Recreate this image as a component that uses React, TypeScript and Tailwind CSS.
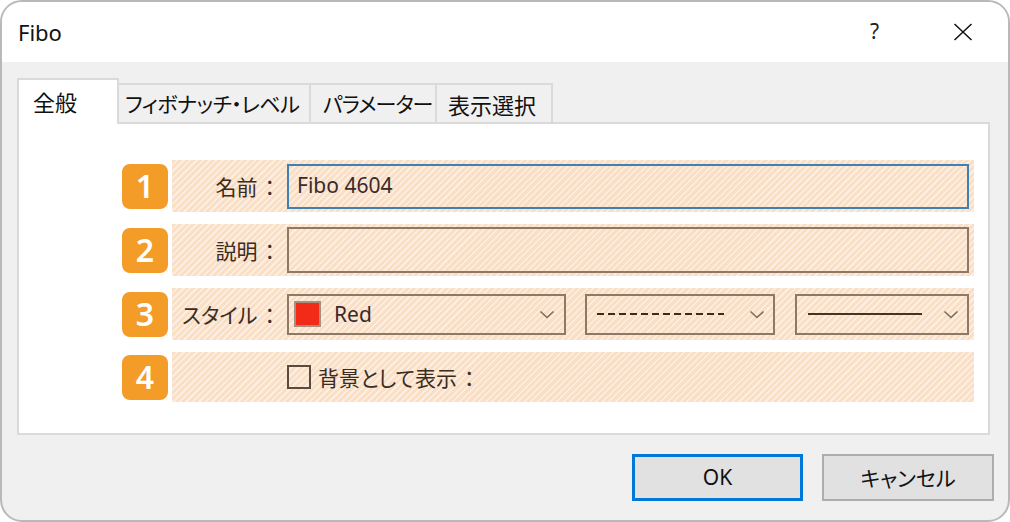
import React from "react";

const FONT = "font-['Noto_Sans_CJK_JP','Noto_Sans',sans-serif]";
const STRIPE =
  "bg-[repeating-linear-gradient(135deg,#f9dfc6_0px,#f9dfc6_3px,#fdeee1_3px,#fdeee1_4.6px)]";

function Chevron({ className = "" }: { className?: string }) {
  return (
    <svg width="16" height="9" viewBox="0 0 16 9" className={className}>
      <path d="M1.5 1.5 L8 7.5 L14.5 1.5" fill="none" stroke="#7f6c5b" strokeWidth="1.6" />
    </svg>
  );
}

function Badge({ n }: { n: string }) {
  return (
    <div className="w-[46px] h-[45px] rounded-[8px] bg-[#f39c27] flex items-center justify-center text-white text-[32px] font-semibold font-['Noto_Sans',sans-serif] leading-none shrink-0">
      {n}
    </div>
  );
}

function Label({ text }: { text: string }) {
  return (
    <div className="w-[115px] shrink-0 flex justify-end items-center pr-[12px] text-[21px] text-[#3b2c22] [font-feature-settings:'palt'] leading-none whitespace-nowrap">
      <span>{text}</span>
      <span className="ml-[7px]">：</span>
    </div>
  );
}

export default function App() {
  return (
    <div className={`w-[1010px] h-[522px] bg-white ${FONT}`}>
      <div className="h-full rounded-[22px] border-2 border-[#b9b9b9] overflow-hidden flex flex-col bg-[#f0f0f0]">
        {/* Title bar */}
        <div className="h-[60px] bg-white flex items-center pl-[16px] pr-[35px] shrink-0">
          <span className="text-[22px] text-[#111] font-['Noto_Sans',sans-serif]">Fibo</span>
          <div className="ml-auto flex items-center gap-[74px]">
            <span className="text-[21px] text-[#222] font-['Noto_Sans',sans-serif]">?</span>
            <svg width="20" height="18" viewBox="0 0 20 18">
              <path d="M1.5 1 L18.5 17 M18.5 1 L1.5 17" stroke="#111" strokeWidth="1.5" fill="none" />
            </svg>
          </div>
        </div>

        {/* Body */}
        <div className="flex-1 flex flex-col pl-[15px] pr-[18px] pt-[16px]">
          {/* Tabs */}
          <div className="flex items-end h-[46px] mb-[-2px] relative z-10 whitespace-nowrap">
            <div className="w-[102px] h-[46px] border-2 border-b-0 border-[#dadada] bg-white flex items-center pl-[14px] pb-[2px] text-[22px] text-[#111] leading-none">
              全般
            </div>
            <div className="w-[192px] h-[41px] border-t-2 border-r-2 border-b-2 border-[#dadada] bg-[#f0f0f0] flex items-center pl-[6px] text-[21px] text-[#111] leading-none [font-feature-settings:'palt'] tracking-[-0.5px]">
              フィボナッチ・レベル
            </div>
            <div className="w-[126px] h-[41px] border-t-2 border-r-2 border-b-2 border-[#dadada] bg-[#f0f0f0] flex items-center pl-[12px] text-[21px] text-[#111] leading-none [font-feature-settings:'palt'] tracking-[-1px] overflow-hidden">
              パラメーター
            </div>
            <div className="w-[116px] h-[41px] border-t-2 border-r-2 border-b-2 border-[#dadada] bg-[#f0f0f0] flex items-center pl-[11px] text-[22px] text-[#111] leading-none">
              表示選択
            </div>
          </div>

          {/* Panel */}
          <div className="h-[313px] border-2 border-[#dadada] bg-white flex flex-col gap-[12px] pt-[36px] pl-[103px] pr-[14px]">
            {/* Row 1 */}
            <div className="flex items-center gap-[4px]">
              <Badge n="1" />
              <div className={`flex-1 h-[52px] flex items-center ${STRIPE}`}>
                <Label text="名前" />
                <div className="w-[682px] h-[45px] border-2 border-[#3f80b5] flex items-center pl-[8px] text-[21px] text-[#3a2a2c] font-['Noto_Sans',sans-serif]">
                  Fibo 4604
                </div>
              </div>
            </div>
            {/* Row 2 */}
            <div className="flex items-center gap-[4px]">
              <Badge n="2" />
              <div className={`flex-1 h-[52px] flex items-center ${STRIPE}`}>
                <Label text="説明" />
                <div className="w-[682px] h-[46px] border-2 border-[#8d7966]" />
              </div>
            </div>
            {/* Row 3 */}
            <div className="flex items-center gap-[4px]">
              <Badge n="3" />
              <div className={`flex-1 h-[52px] flex items-center ${STRIPE}`}>
                <Label text="スタイル" />
                <div className="w-[279px] h-[41px] border-2 border-[#8d7966] flex items-center pl-[5px] pr-[9px]">
                  <div className="w-[27px] h-[26px] bg-[#f22a18] border-2 border-[#a3907f]" />
                  <span className="ml-[13px] text-[21px] text-[#3a2a2c] font-['Noto_Sans',sans-serif] leading-none">Red</span>
                  <Chevron className="ml-auto" />
                </div>
                <div className="ml-[19px] w-[190px] h-[41px] border-2 border-[#8d7966] flex items-center pl-[10px] pr-[8px]">
                  <div className="w-[127px] h-[2px] bg-[repeating-linear-gradient(90deg,#3d2a1c_0px,#3d2a1c_7px,transparent_7px,transparent_11px)]" />
                  <Chevron className="ml-auto" />
                </div>
                <div className="ml-[20px] w-[174px] h-[41px] border-2 border-[#8d7966] flex items-center pl-[11px] pr-[8px]">
                  <div className="w-[114px] h-[2px] bg-[#4a3222]" />
                  <Chevron className="ml-auto" />
                </div>
              </div>
            </div>
            {/* Row 4 */}
            <div className="flex items-center gap-[4px]">
              <Badge n="4" />
              <div className={`flex-1 h-[50px] flex items-center ${STRIPE}`}>
                <div className="w-[115px] shrink-0" />
                <div className="w-[24px] h-[24px] border-2 border-[#5c4a3c]" />
                <span className="ml-[7px] text-[21px] text-[#3b2c22] leading-none [font-feature-settings:'palt'] whitespace-nowrap">
                  背景として表示<span className="ml-[7px]">：</span>
                </span>
              </div>
            </div>
          </div>

          {/* Buttons */}
          <div className="flex justify-end gap-[19px] pt-[19px] mr-[-4px]">
            <div className="w-[171px] h-[47px] border-[3px] border-[#0078d7] bg-[#e1e1e1] flex items-center justify-center text-[21px] text-[#111] font-['Noto_Sans',sans-serif]">
              OK
            </div>
            <div className="w-[172px] h-[47px] border-2 border-[#adadad] bg-[#e1e1e1] flex items-center justify-center text-[21px] text-[#111] [font-feature-settings:'palt']">
              キャンセル
            </div>
          </div>
        </div>
      </div>
    </div>
  );
}
